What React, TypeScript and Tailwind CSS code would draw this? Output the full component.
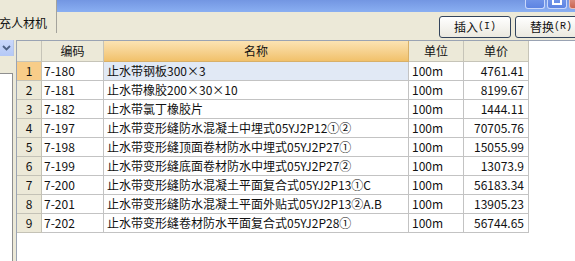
import React from "react";

const rows: [string, string, string, string, string][] = [
  ["1", "7-180", "止水带钢板300×3", "100m", "4761.41"],
  ["2", "7-181", "止水带橡胶200×30×10", "100m", "8199.67"],
  ["3", "7-182", "止水带氯丁橡胶片", "100m", "1444.11"],
  ["4", "7-197", "止水带变形缝防水混凝土中埋式05YJ2P12①②", "100m", "70705.76"],
  ["5", "7-198", "止水带变形缝顶面卷材防水中埋式05YJ2P27①", "100m", "15055.99"],
  ["6", "7-199", "止水带变形缝底面卷材防水中埋式05YJ2P27②", "100m", "13073.9"],
  ["7", "7-200", "止水带变形缝防水混凝土平面复合式05YJ2P13①C", "100m", "56183.34"],
  ["8", "7-201", "止水带变形缝防水混凝土平面外贴式05YJ2P13②A.B", "100m", "13905.23"],
  ["9", "7-202", "止水带变形缝卷材防水平面复合式05YJ2P28①", "100m", "56744.65"],
];

function XPButton({ label, hot }: { label: string; hot: string }) {
  return (
    <div className="h-[22px] w-[72px] shrink-0 rounded-[3px] border border-[#33445c] bg-gradient-to-b from-white to-[#ebe9e0] flex items-center justify-center leading-none">
      <span>{label}</span>
      <span className="font-['Liberation_Mono',monospace] text-[10px]">({hot})</span>
    </div>
  );
}

export default function App() {
  return (
    <div className="w-[575px] h-[261px] overflow-hidden bg-white text-[12px] text-[#111] flex flex-col font-['Noto_Sans_CJK_SC',sans-serif]">
      {/* top band */}
      <div className="flex h-[40px] shrink-0">
        <div className="w-[57px] shrink-0 bg-[#ECE9D8] flex flex-col">
          <div className="h-[33px] border-r border-[#a4a39c] flex items-center pt-[12px] overflow-hidden whitespace-nowrap">
            <span className="ml-[-1px] leading-none">充人材机</span>
          </div>
        </div>
        <div className="flex-1 flex flex-col min-w-0">
          <div className="h-[12px] shrink-0 bg-gradient-to-b from-[#7396e2] to-[#8aaff2] flex items-start pl-[468px] gap-[2px] overflow-hidden">
            <div className="w-[20px] h-[9px] shrink-0 rounded-b-[3px] border-x border-b border-[#c9d8fb] bg-gradient-to-b from-[#6f93e8] to-[#5d84e2]" />
            <div className="w-[20px] h-[9px] shrink-0 rounded-b-[3px] border-x border-b border-[#c9d8fb] bg-gradient-to-b from-[#6f93e8] to-[#5d84e2] flex justify-center">
              <div className="w-[10px] h-[5px] border-x-2 border-b-2 border-white" />
            </div>
            <div className="w-[20px] h-[9px] shrink-0 rounded-b-[3px] border-x border-b border-[#e8c0b8] bg-gradient-to-b from-[#d98a7c] to-[#c9634f]" />
          </div>
          <div className="flex-1 bg-[#ECE9D8] flex items-start pt-[4px] pl-[382px] gap-[4px] overflow-hidden">
            <XPButton label="插入" hot="I" />
            <XPButton label="替换" hot="R" />
          </div>
        </div>
      </div>

      {/* lower section */}
      <div className="flex flex-1 min-h-0">
        <div className="w-[16px] shrink-0 bg-[#ECE9D8] flex flex-col">
          <div className="w-[14px] h-[16px] border-r border-[#b7c6e6] bg-gradient-to-b from-[#cad8fb] to-[#b4c8f6] flex items-center justify-center">
            <svg width="9" height="6" viewBox="0 0 9 6">
              <path d="M1 1 L4.5 4.5 L8 1" fill="none" stroke="#4d6185" strokeWidth="1.8" />
            </svg>
          </div>
          <div className="h-[17px]" />
          <div className="flex-1 w-[13px] bg-white border-t border-r border-[#8f8f8f]" />
        </div>
        <div className="flex-1 border-l border-t border-[#9aa3b3] bg-white flex flex-col">
          {/* header */}
          <div className="flex h-[21px] shrink-0">
            <div className="w-[25px] shrink-0 bg-[#ECE9D8] border-r border-b border-[#c6c4b8]" />
            <div className="w-[62px] shrink-0 bg-[#ECE9D8] border-r border-b border-[#c6c4b8] flex items-center justify-center leading-none">编码</div>
            <div className="w-[305px] shrink-0 bg-gradient-to-b from-[#fbe3b3] to-[#f1c16a] border-r border-b border-[#d8b068] flex items-center justify-center leading-none">名称</div>
            <div className="w-[55px] shrink-0 bg-[#ECE9D8] border-r border-b border-[#c6c4b8] flex items-center justify-center leading-none">单位</div>
            <div className="w-[65px] shrink-0 bg-[#ECE9D8] border-r border-b border-[#c6c4b8] flex items-center justify-center leading-none">单价</div>
          </div>
          {rows.map((r, i) => {
            const sel = i === 0;
            return (
              <div key={r[0]} className="flex h-[19px] shrink-0 leading-none">
                <div className={`w-[25px] shrink-0 border-r border-b border-[#c4c2b6] flex items-center justify-center ${sel ? "bg-[#f8cd89]" : "bg-[#ECE9D8]"}`}>
                  {r[0]}
                </div>
                <div className="w-[62px] shrink-0 border-r border-b border-[#c3c3c3] flex items-center pl-[2px] whitespace-nowrap overflow-hidden">
                  {r[1]}
                </div>
                <div className={`w-[305px] shrink-0 border-r border-b border-[#c3c3c3] flex items-center pl-[3px] whitespace-nowrap overflow-hidden ${sel ? "bg-[#e1e9f5]" : ""}`}>
                  {r[2]}
                </div>
                <div className="w-[55px] shrink-0 border-r border-b border-[#c3c3c3] flex items-center pl-[3px] whitespace-nowrap">
                  {r[3]}
                </div>
                <div className="w-[65px] shrink-0 border-r border-b border-[#c3c3c3] flex items-center justify-end pr-[4px] whitespace-nowrap">
                  {r[4]}
                </div>
              </div>
            );
          })}
        </div>
      </div>
    </div>
  );
}
